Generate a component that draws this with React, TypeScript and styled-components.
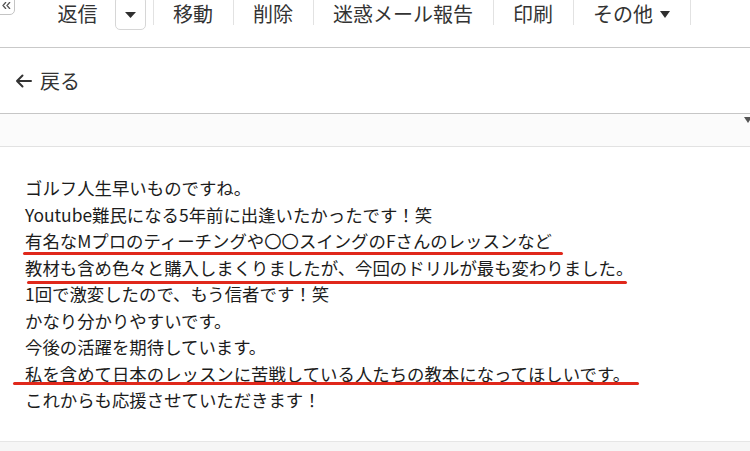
import React from "react";
import styled, { createGlobalStyle } from "styled-components";

const Global = createGlobalStyle`
  html, body { margin: 0; padding: 0; background: #fff; overflow: hidden; }
  body { font-family: "Noto Sans CJK JP", "Noto Sans", sans-serif; color: #222; }
  * { box-sizing: border-box; }
`;

const Page = styled.div`
  width: 750px;
  height: 451px;
  display: flex;
  flex-direction: column;
  overflow: hidden;
`;

const Toolbar = styled.div`
  display: flex;
  align-items: flex-start;
  height: 48px;
  border-bottom: 1px solid #c9c9c9;
  flex-shrink: 0;
`;

const CornerButton = styled.div`
  width: 35px;
  height: 35px;
  margin: -20px 23px 0 -20px;
  border: 1px solid #c4c4c4;
  border-radius: 5px;
  background: #fff;
  display: flex;
  align-items: flex-end;
  justify-content: flex-end;
  padding: 0 3px 5px 0;
  overflow: hidden;
`;

const Item = styled.div<{ $pr?: number }>`
  font-size: 20px;
  line-height: 28px;
  color: #333;
  padding: 0 ${(p) => (p.$pr ?? 19.5)}px 0 19.5px;
  white-space: nowrap;
  display: flex;
  align-items: center;
`;

const Sep = styled.div`
  width: 1px;
  height: 25px;
  background: #e2e2e2;
  flex-shrink: 0;
`;

const DropBox = styled.div`
  width: 31px;
  height: 34px;
  margin: -4px 7px 0 0;
  border: 1px solid #d6d6d6;
  border-radius: 5px;
  display: flex;
  align-items: center;
  justify-content: center;
  padding-top: 3px;
`;

const Caret = styled.svg<{ $ml?: number }>`
  display: block;
  margin-left: ${(p) => p.$ml ?? 0}px;
  flex-shrink: 0;
`;

const BackRow = styled.div`
  height: 66px;
  border-bottom: 1px solid #c6c6c6;
  display: flex;
  align-items: center;
  padding-left: 15px;
  gap: 8px;
  flex-shrink: 0;
`;

const BackText = styled.span`
  font-size: 20px;
  line-height: 28px;
  color: #333;
`;

const Band = styled.div`
  height: 33px;
  background: #fbfbfb;
  border-bottom: 1px solid #e2e2e2;
  position: relative;
  flex-shrink: 0;
`;

const CornerMark = styled.div`
  position: absolute;
  right: -2px;
  top: 3px;
  width: 0;
  height: 0;
  border-left: 4px solid transparent;
  border-right: 4px solid transparent;
  border-top: 6px solid #555;
`;

const Body = styled.div`
  flex: 1;
  padding: 28px 0 0 25px;
`;

const Line = styled.div`
  position: relative;
  font-size: 17.4px;
  line-height: 26.5px;
  height: 26.5px;
  color: #1c1c1c;
  white-space: nowrap;
`;

const RedLine = styled.span<{ $left: number; $width: number; $top: number }>`
  position: absolute;
  left: ${(p) => p.$left}px;
  width: ${(p) => p.$width}px;
  top: ${(p) => p.$top}px;
  height: 3px;
  border-radius: 2px;
  background: #e0281b;
`;

const Footer = styled.div`
  height: 10px;
  background: #f6f6f6;
  border-top: 1px solid #e6e6e6;
  flex-shrink: 0;
`;

const lines: { text: string; mark?: { left: number; width: number; top: number } }[] = [
  { text: "ゴルフ人生早いものですね。" },
  { text: "Youtube難民になる5年前に出逢いたかったです！笑" },
  { text: "有名なMプロのティーチングや〇〇スイングのFさんのレッスンなど", mark: { left: -2, width: 540, top: 24 } },
  { text: "教材も含め色々と購入しまくりましたが、今回のドリルが最も変わりました。", mark: { left: 2, width: 600, top: 26 } },
  { text: "1回で激変したので、もう信者です！笑" },
  { text: "かなり分かりやすいです。" },
  { text: "今後の活躍を期待しています。" },
  { text: "私を含めて日本のレッスンに苦戦している人たちの教本になってほしいです。", mark: { left: -12, width: 626, top: 21 } },
  { text: "これからも応援させていただきます！" },
];

const Tri = ({ w, h, ml }: { w: number; h: number; ml?: number }) => (
  <Caret $ml={ml} width={w} height={h} viewBox={`0 0 ${w} ${h}`}>
    <path d={`M0 0 L${w} 0 L${w / 2} ${h} Z`} fill="#2f2f2f" />
  </Caret>
);

export default function App() {
  return (
    <>
      <Global />
      <Page>
        <Toolbar>
          <CornerButton>
            <svg width="9" height="7" viewBox="0 0 9 7">
              <path d="M4 0 L1 3.5 L4 7 M8 0 L5 3.5 L8 7" fill="none" stroke="#555" strokeWidth="1.3" />
            </svg>
          </CornerButton>
          <Item $pr={17}>返信</Item>
          <DropBox>
            <Tri w={11} h={6} />
          </DropBox>
          <Sep />
          <Item>移動</Item>
          <Sep />
          <Item>削除</Item>
          <Sep />
          <Item>迷惑メール報告</Item>
          <Sep />
          <Item>印刷</Item>
          <Sep />
          <Item>
            その他
            <Tri w={10} h={7} ml={7} />
          </Item>
          <Sep />
        </Toolbar>
        <BackRow>
          <svg width="17" height="14" viewBox="0 0 17 14">
            <path
              d="M16 7 H2 M7.5 1.5 L2 7 L7.5 12.5"
              fill="none"
              stroke="#333"
              strokeWidth="2"
              strokeLinecap="round"
              strokeLinejoin="round"
            />
          </svg>
          <BackText>戻る</BackText>
        </BackRow>
        <Band>
          <CornerMark />
        </Band>
        <Body>
          {lines.map((l, i) => (
            <Line key={i}>
              {l.text}
              {l.mark && <RedLine $left={l.mark.left} $width={l.mark.width} $top={l.mark.top} />}
            </Line>
          ))}
        </Body>
        <Footer />
      </Page>
    </>
  );
}
